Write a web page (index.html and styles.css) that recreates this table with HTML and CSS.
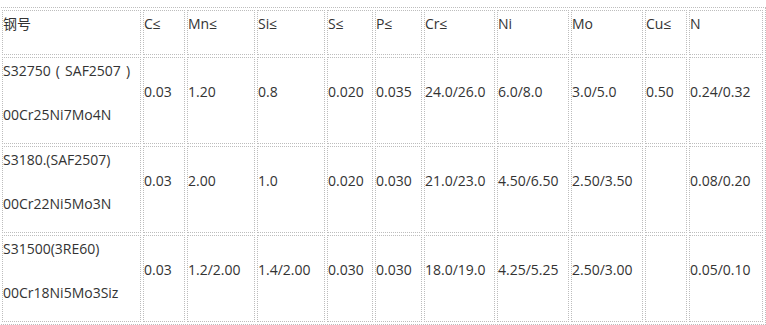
FILE: index.html
```html
<!DOCTYPE html>
<html lang="zh-CN">
<head>
<meta charset="utf-8">
<title>双相不锈钢化学成分</title>
<link rel="stylesheet" href="styles.css">
</head>
<body>
<table class="spec">
  <tr class="head">
    <td class="c1"><p>钢号</p></td>
    <td class="c2"><p>C≤</p></td>
    <td class="c3"><p>Mn≤</p></td>
    <td class="c4"><p>Si≤</p></td>
    <td class="c5"><p>S≤</p></td>
    <td class="c6"><p>P≤</p></td>
    <td class="c7"><p>Cr≤</p></td>
    <td class="c8"><p>Ni</p></td>
    <td class="c9"><p>Mo</p></td>
    <td class="c10"><p>Cu≤</p></td>
    <td class="c11"><p>N</p></td>
  </tr>
  <tr>
    <td class="name"><p class="wide">S32750 ( SAF2507 )</p><p>00Cr25Ni7Mo4N</p></td>
    <td><p>0.03</p></td>
    <td><p>1.20</p></td>
    <td><p>0.8</p></td>
    <td><p>0.020</p></td>
    <td><p>0.035</p></td>
    <td><p>24.0/26.0</p></td>
    <td><p>6.0/8.0</p></td>
    <td><p>3.0/5.0</p></td>
    <td><p>0.50</p></td>
    <td><p>0.24/0.32</p></td>
  </tr>
  <tr>
    <td class="name"><p>S3180.(SAF2507)</p><p>00Cr22Ni5Mo3N</p></td>
    <td><p>0.03</p></td>
    <td><p>2.00</p></td>
    <td><p>1.0</p></td>
    <td><p>0.020</p></td>
    <td><p>0.030</p></td>
    <td><p>21.0/23.0</p></td>
    <td><p>4.50/6.50</p></td>
    <td><p>2.50/3.50</p></td>
    <td></td>
    <td><p>0.08/0.20</p></td>
  </tr>
  <tr>
    <td class="name"><p>S31500(3RE60)</p><p>00Cr18Ni5Mo3Siz</p></td>
    <td><p>0.03</p></td>
    <td><p>1.2/2.00</p></td>
    <td><p>1.4/2.00</p></td>
    <td><p>0.030</p></td>
    <td><p>0.030</p></td>
    <td><p>18.0/19.0</p></td>
    <td><p>4.25/5.25</p></td>
    <td><p>2.50/3.00</p></td>
    <td></td>
    <td><p>0.05/0.10</p></td>
  </tr>
</table>
</body>
</html>
```
FILE: styles.css
```css
html, body {
  margin: 0;
  padding: 0;
  background: #ffffff;
}

.spec {
  box-sizing: border-box;
  width: 767px;
  margin: 7px 0 0 -1px;
  table-layout: fixed;
  border-collapse: separate;
  border-spacing: 2px;
  border: 1px dotted #bdbdbd;
  font-family: "Open Sans", "Noto Sans CJK SC", sans-serif;
  font-size: 14px;
  color: #333333;
}

.spec td {
  box-sizing: border-box;
  padding: 0;
  border: 1px dotted #bdbdbd;
  vertical-align: middle;
  text-align: left;
}

.spec p {
  margin: 0 0 17px 0;
  line-height: 25.5px;
  white-space: nowrap;
}

.spec .name p:first-child {
  margin-bottom: 19px;
}

.spec .name p:last-child {
  margin-bottom: 15px;
}

.spec p.wide {
  word-spacing: 1.5px;
}

.c1 { width: 139px; }
.c2 { width: 42px; }
.c3 { width: 68px; }
.c4 { width: 68px; }
.c5 { width: 46px; }
.c6 { width: 47px; }
.c7 { width: 71px; }
.c8 { width: 72px; }
.c9 { width: 72px; }
.c10 { width: 42px; }
.c11 { width: 74px; }
```
